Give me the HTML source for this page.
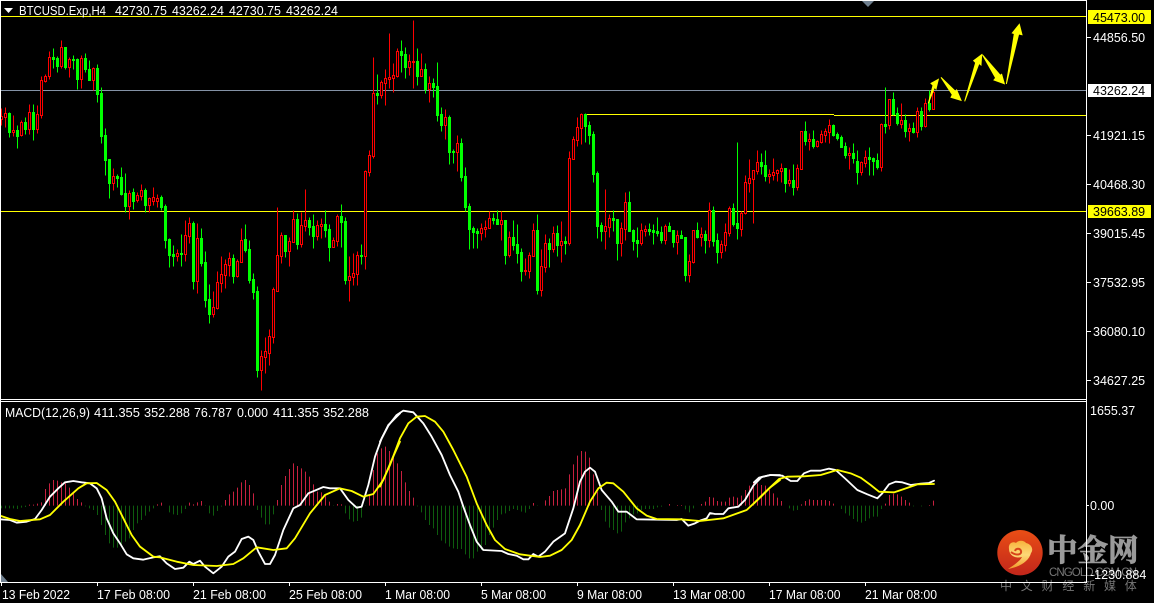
<!DOCTYPE html>
<html><head><meta charset="utf-8"><title>BTCUSD H4</title>
<style>
html,body{margin:0;padding:0;background:#000;width:1154px;height:603px;overflow:hidden}
svg{display:block}
text{font-family:"Liberation Sans",sans-serif;font-size:12.5px;fill:#fff;white-space:pre}
</style></head><body>
<svg width="1154" height="603" viewBox="0 0 1154 603" xmlns="http://www.w3.org/2000/svg">
<rect width="1154" height="603" fill="#000"/>
<!-- level lines -->
<g shape-rendering="crispEdges">
<rect x="1" y="16" width="1085" height="1" fill="#ff0"/>
<rect x="1" y="90" width="1085" height="1" fill="#8492a6"/>
<rect x="1" y="211" width="1085" height="1" fill="#ff0"/>
<rect x="585" y="114" width="249" height="1" fill="#ff0"/>
<rect x="834" y="115" width="252" height="1" fill="#ff0"/>
</g>
<!-- candles -->
<g transform="translate(.5,.5)" shape-rendering="crispEdges" stroke-width="1">
<path stroke="#0f0" fill="#0f0" d="M9 112V137M8 113h2V132h-2zM17 125V148M16 130h2V136h-2zM25 117V134M24 122h2V129h-2zM33 104V140M32 112h2V129h-2zM53 48V68M52 57h2V59h-2zM57 56V72M56 58h2V66h-2zM65 47V69M64 47h2V67h-2zM73 55V69M72 59h2V60h-2zM77 58V89M76 59h2V79h-2zM85 53V72M84 58h2V69h-2zM89 60V80M88 69h2V80h-2zM97 64V102M96 68h2V94h-2zM101 87V143M100 93h2V136h-2zM105 128V175M104 135h2V160h-2zM109 159V198M108 159h2V183h-2zM117 174V187M116 176h2V178h-2zM121 167V195M120 177h2V194h-2zM125 173V212M124 193h2V206h-2zM133 188V209M132 192h2V201h-2zM145 188V212M144 190h2V205h-2zM161 195V210M160 197h2V207h-2zM165 204V248M164 206h2V240h-2zM169 238V267M168 239h2V255h-2zM173 245V266M172 254h2V256h-2zM181 234V266M180 253h2V254h-2zM193 221V289M192 223h2V281h-2zM201 228V266M200 238h2V263h-2zM205 251V307M204 262h2V300h-2zM209 284V323M208 299h2V314h-2zM233 254V283M232 258h2V276h-2zM245 224V252M244 239h2V250h-2zM249 240V283M248 249h2V280h-2zM253 273V299M252 279h2V292h-2zM257 286V377M256 291h2V370h-2zM285 235V257M284 235h2V251h-2zM297 213V249M296 219h2V244h-2zM309 217V235M308 220h2V227h-2zM313 214V248M312 226h2V236h-2zM325 210V237M324 224h2V230h-2zM329 224V261M328 229h2V247h-2zM341 204V247M340 216h2V222h-2zM345 217V284M344 221h2V280h-2zM361 244V264M360 255h2V256h-2zM377 74V104M376 93h2V95h-2zM401 40V72M400 51h2V55h-2zM405 47V78M404 54h2V67h-2zM417 48V85M416 61h2V76h-2zM425 63V93M424 69h2V89h-2zM433 78V97M432 83h2V87h-2zM437 62V121M436 86h2V115h-2zM441 107V131M440 114h2V125h-2zM449 115V164M448 117h2V152h-2zM453 149V163M452 151h2V152h-2zM461 138V181M460 143h2V177h-2zM465 167V211M464 176h2V207h-2zM469 203V249M468 206h2V229h-2zM473 226V248M472 228h2V232h-2zM477 228V248M476 231h2V233h-2zM493 213V224M492 218h2V220h-2zM497 210V224M496 219h2V224h-2zM505 220V264M504 220h2V255h-2zM513 220V250M512 237h2V245h-2zM517 224V263M516 244h2V253h-2zM521 248V281M520 252h2V271h-2zM537 214V294M536 230h2V290h-2zM549 238V267M548 243h2V249h-2zM557 225V256M556 233h2V245h-2zM565 236V254M564 241h2V243h-2zM585 113V142M584 114h2V126h-2zM589 121V144M588 125h2V135h-2zM593 131V182M592 134h2V174h-2zM597 171V238M596 173h2V226h-2zM601 222V241M600 225h2V231h-2zM613 210V231M612 218h2V220h-2zM617 219V260M616 219h2V243h-2zM629 191V231M628 202h2V231h-2zM633 229V250M632 230h2V241h-2zM637 227V257M636 240h2V243h-2zM649 223V235M648 229h2V231h-2zM653 224V244M652 230h2V232h-2zM657 217V236M656 231h2V233h-2zM661 226V243M660 232h2V240h-2zM669 222V231M668 226h2V231h-2zM673 230V247M672 230h2V242h-2zM681 230V238M680 235h2V238h-2zM685 237V281M684 237h2V275h-2zM697 222V238M696 230h2V237h-2zM705 230V253M704 234h2V240h-2zM713 206V246M712 210h2V241h-2zM717 233V263M716 240h2V252h-2zM733 203V226M732 208h2V224h-2zM737 142V239M736 223h2V228h-2zM761 153V174M760 162h2V166h-2zM765 150V181M764 165h2V176h-2zM785 168V192M784 168h2V183h-2zM793 164V195M792 180h2V187h-2zM805 121V145M804 131h2V141h-2zM813 130V148M812 139h2V146h-2zM833 124V136M832 125h2V135h-2zM837 132V140M836 134h2V138h-2zM841 135V147M840 137h2V147h-2zM845 142V158M844 146h2V155h-2zM853 143V163M852 153h2V158h-2zM857 150V184M856 161h2V172h-2zM869 147V175M868 157h2V159h-2zM873 157V175M872 158h2V161h-2zM877 153V169M876 160h2V167h-2zM885 87V133M884 124h2V126h-2zM893 92V115M892 99h2V114h-2zM897 107V125M896 113h2V123h-2zM905 114V137M904 120h2V131h-2zM913 122V133M912 128h2V132h-2zM921 107V130M920 111h2V126h-2zM929 90V111M928 103h2V109h-2z"/>
<path stroke="#f00" fill="#000" d="M1 108V116M1 119V125M0 116h2V119h-2zM5 107V113M5 117V127M4 113h2V117h-2zM13 115V130M13 132V136M12 130h2V132h-2zM21 120V122M21 135V136M20 122h2V135h-2zM29 104V112M29 129V134M28 112h2V129h-2zM37 105V114M37 129V133M36 114h2V129h-2zM41 76V80M41 115V118M40 80h2V115h-2zM45 74V76M45 81V82M44 76h2V81h-2zM49 51V57M49 76V79M48 57h2V76h-2zM61 40V47M61 66V68M60 47h2V66h-2zM69 57V59M69 67V77M68 59h2V67h-2zM81 55V58M81 79V88M80 58h2V79h-2zM93 67V68M93 80V90M92 68h2V80h-2zM113 168V176M113 183V190M112 176h2V183h-2zM129 190V193M129 206V219M128 193h2V206h-2zM137 192V195M137 200V202M136 195h2V200h-2zM141 184V190M141 196V200M140 190h2V196h-2zM149 197V198M149 205V212M148 198h2V205h-2zM153 187V197M153 201V205M152 197h2V201h-2zM157 194V198M157 201V207M156 198h2V201h-2zM177 249V253M177 256V261M176 253h2V256h-2zM185 220V235M185 254V261M184 235h2V254h-2zM189 217V223M189 236V243M188 223h2V236h-2zM197 223V238M197 281V293M196 238h2V281h-2zM213 291V307M213 314V317M212 307h2V314h-2zM217 271V282M217 308V309M216 282h2V308h-2zM221 256V274M221 283V292M220 274h2V283h-2zM225 259V264M225 275V288M224 264h2V275h-2zM229 252V258M229 265V276M228 258h2V265h-2zM237 259V261M237 276V277M236 261h2V276h-2zM241 228V240M240 240h2V262h-2zM261 350V356M261 370V390M260 356h2V370h-2zM265 337V351M265 357V373M264 351h2V357h-2zM269 329V336M269 353V365M268 336h2V353h-2zM273 287V289M273 337V343M272 289h2V337h-2zM277 207V255M276 255h2V291h-2zM281 232V235M281 256V263M280 235h2V256h-2zM289 237V241M289 251V266M288 241h2V251h-2zM293 210V219M292 219h2V242h-2zM301 212V225M301 244V247M300 225h2V244h-2zM305 189V220M305 226V231M304 220h2V226h-2zM317 220V225M317 236V240M316 225h2V236h-2zM321 218V224M321 226V238M320 224h2V226h-2zM333 237V240M332 240h2V247h-2zM337 214V216M337 241V246M336 216h2V241h-2zM349 256V276M349 280V301M348 276h2V280h-2zM353 253V273M353 277V285M352 273h2V277h-2zM357 251V255M357 274V285M356 255h2V274h-2zM365 170V171M365 256V269M364 171h2V256h-2zM369 150V155M369 172V176M368 155h2V172h-2zM373 57V93M373 156V158M372 93h2V156h-2zM381 80V82M381 95V98M380 82h2V95h-2zM385 69V78M385 83V105M384 78h2V83h-2zM389 33V77M389 79V88M388 77h2V79h-2zM393 63V75M393 78V92M392 75h2V78h-2zM397 48V51M397 76V77M396 51h2V76h-2zM409 54V61M409 67V75M408 61h2V67h-2zM413 20V61M413 62V88M412 61h2V62h-2zM421 53V69M421 76V76M420 69h2V76h-2zM429 76V83M429 89V102M428 83h2V89h-2zM445 109V117M445 125V139M444 117h2V125h-2zM457 135V143M457 152V171M456 143h2V152h-2zM481 223V228M481 233V240M480 228h2V233h-2zM485 220V227M485 229V237M484 227h2V229h-2zM489 211V218M488 218h2V228h-2zM501 211V220M501 224V240M500 220h2V224h-2zM509 231V237M509 255V257M508 237h2V255h-2zM525 258V270M525 271V275M524 270h2V271h-2zM529 252V255M529 271V278M528 255h2V271h-2zM533 223V230M532 230h2V256h-2zM541 249V266M541 290V296M540 266h2V290h-2zM545 234V243M545 267V272M544 243h2V267h-2zM553 226V233M553 249V252M552 233h2V249h-2zM561 221V241M561 245V262M560 241h2V245h-2zM569 151V158M569 243V245M568 158h2V243h-2zM573 136V139M572 139h2V159h-2zM577 117V127M577 140V146M576 127h2V140h-2zM581 113V114M581 128V144M580 114h2V128h-2zM605 189V226M605 231V249M604 226h2V231h-2zM609 214V218M609 227V237M608 218h2V227h-2zM621 222V228M621 243V256M620 228h2V243h-2zM625 192V202M625 229V240M624 202h2V229h-2zM641 223V230M641 243V245M640 230h2V243h-2zM645 225V229M645 231V236M644 229h2V231h-2zM665 224V226M665 240V244M664 226h2V240h-2zM677 230V235M677 242V254M676 235h2V242h-2zM689 254V261M689 275V282M688 261h2V275h-2zM693 230V230M693 262V263M692 230h2V262h-2zM701 227V234M701 237V246M700 234h2V237h-2zM709 202V210M709 240V247M708 210h2V240h-2zM721 240V244M721 252V258M720 244h2V252h-2zM725 223V232M725 245V251M724 232h2V245h-2zM729 206V208M729 233V236M728 208h2V233h-2zM741 211V213M741 229V236M740 213h2V229h-2zM745 175V182M745 213V214M744 182h2V213h-2zM749 159V178M749 183V192M748 178h2V183h-2zM753 170V170M753 179V223M752 170h2V179h-2zM757 150V162M757 171V174M756 162h2V171h-2zM769 169V174M769 176V183M768 174h2V176h-2zM773 158V172M773 175V180M772 172h2V175h-2zM777 169V170M777 173V181M776 170h2V173h-2zM781 163V168M781 171V182M780 168h2V171h-2zM789 169V180M789 183V186M788 180h2V183h-2zM797 164V168M797 187V190M796 168h2V187h-2zM801 131V131M801 169V169M800 131h2V169h-2zM809 133V139M809 141V150M808 139h2V141h-2zM817 140V141M817 146V147M816 141h2V146h-2zM821 130V134M821 142V143M820 134h2V142h-2zM825 128V131M825 135V142M824 131h2V135h-2zM829 119V125M829 132V143M828 125h2V132h-2zM849 147V153M849 155V169M848 153h2V155h-2zM861 161V162M861 172V175M860 162h2V172h-2zM865 150V157M865 163V167M864 157h2V163h-2zM881 123V124M881 167V171M880 124h2V167h-2zM889 99V99M889 125V129M888 99h2V125h-2zM901 103V120M901 124V128M900 120h2V124h-2zM909 123V128M909 131V141M908 128h2V131h-2zM917 107V111M917 132V137M916 111h2V132h-2zM925 98V103M925 126V127M924 103h2V126h-2zM933 90V92M932 92h2V109h-2z"/>
</g>
<!-- drawn arrows -->
<g fill="#ff0" stroke="#ff0" stroke-width="3" stroke-linejoin="miter" transform="translate(925,20) scale(.33333)">
<polygon points="10,250 24,196 18,190 40,178 33,207 29,201"/>
<polygon points="48,172 92,215 95,210 108,241 78,232 82,224"/>
<polygon points="119,244 152,128 146,122 170,104 168,135 162,130"/>
<polygon points="172,104 226,166 230,163 238,191 207,180 212,174"/>
<polygon points="244,192 268,41 262,39 283,13 291,44 281,42"/>
</g>
<!-- MACD histogram (y in 3x units) -->
<g transform="translate(.5,395) scale(1,.33333)" shape-rendering="crispEdges" stroke-width="1" fill="none">
<path stroke="#c8203f" d="M29 332V329M33 332V329M37 332V326M41 332V322M45 332V282M49 332V265M53 332V255M57 332V257M61 332V262M65 332V265M69 332V278M73 332V295M77 332V312M81 332V322M157 332V328M161 332V323M189 332V323M193 332V328M197 332V322M201 332V318M225 332V315M229 332V298M233 332V290M237 332V278M241 332V262M245 332V255M249 332V270M253 332V295M277 332V315M281 332V270M285 332V243M289 332V222M293 332V205M297 332V213M301 332V220M305 332V230M309 332V245M313 332V268M317 332V290M321 332V292M325 332V302M329 332V320M337 332V327M341 332V328M369 332V300M373 332V225M377 332V175M381 332V160M385 332V155M389 332V168M393 332V188M397 332V205M401 332V228M405 332V262M409 332V288M413 332V308M533 332V324M545 332V316M549 332V303M553 332V288M557 332V285M561 332V283M565 332V280M569 332V238M573 332V208M577 332V182M581 332V168M585 332V170M589 332V188M593 332V238M597 332V290M669 332V327M677 332V330M681 332V330M701 332V327M705 332V320M709 332V306M713 332V308M717 332V318M721 332V320M725 332V320M729 332V308M733 332V305M737 332V308M741 332V302M745 332V285M749 332V272M753 332V262M757 332V265M761 332V270M765 332V272M769 332V285M773 332V295M777 332V308M781 332V318M801 332V328M805 332V318M809 332V313M813 332V315M817 332V315M821 332V315M825 332V315M829 332V318M833 332V326M885 332V326M889 332V300M893 332V296M897 332V298M901 332V305M905 332V315M909 332V323M929 332V330M933 332V317"/>
<path stroke="#0e5c0e" d="M1 332V340M5 332V340M9 332V340M13 332V340M17 332V342M21 332V338M25 332V336M85 332V334M89 332V340M93 332V345M97 332V360M101 332V390M105 332V420M109 332V445M113 332V458M117 332V458M121 332V455M125 332V440M129 332V430M133 332V405M137 332V385M141 332V375M145 332V362M149 332V350M153 332V340M169 332V352M173 332V358M177 332V360M181 332V355M185 332V342M205 332V333M209 332V355M213 332V362M217 332V348M221 332V335M257 332V345M261 332V368M265 332V388M269 332V388M273 332V358M333 332V333M345 332V355M349 332V373M353 332V380M357 332V378M361 332V368M365 332V333M417 332V334M421 332V352M425 332V375M429 332V390M433 332V400M437 332V420M441 332V437M445 332V445M449 332V455M453 332V460M457 332V462M461 332V462M465 332V478M469 332V490M473 332V490M477 332V470M481 332V465M485 332V450M489 332V420M493 332V398M497 332V375M501 332V358M505 332V355M509 332V348M513 332V342M517 332V345M521 332V350M525 332V353M529 332V342M537 332V333M601 332V345M605 332V380M609 332V398M613 332V405M617 332V415M621 332V410M625 332V382M629 332V370M633 332V358M637 332V355M641 332V345M645 332V342M649 332V342M653 332V342M657 332V337M661 332V335M685 332V343M689 332V352M693 332V340M789 332V340M793 332V347M797 332V345M841 332V342M845 332V355M849 332V362M853 332V372M857 332V380M861 332V383M865 332V378M869 332V370M873 332V365M877 332V365M881 332V342M913 332V334M921 332V334"/>
</g>
<!-- MACD lines -->
<g fill="none" stroke-linejoin="round" stroke-linecap="round" stroke-width="5.5">
<g transform="translate(0,395) scale(.33333)">
<polyline stroke="#fff" points="0,373 30,375 50,383 80,380 105,372 125,345 150,305 175,280 195,262 220,258 245,262 270,265 290,280 305,310 320,370 340,415 360,445 380,478 400,490 430,494 460,487 480,484 500,505 525,522 550,518 568,500 580,507 600,497 615,515 640,535 665,515 685,485 705,470 725,432 745,425 760,435 775,470 795,507 810,507 825,480 850,405 880,340 900,330 925,295 970,276 990,280 1020,280 1045,315 1070,338 1085,335 1105,270 1125,185 1145,130 1165,90 1200,55"/>
<polyline stroke="#ff0" points="0,362 30,372 60,378 120,373 150,360 190,320 235,280 260,265 290,264 320,285 345,320 370,370 395,420 420,455 460,485 480,487 530,500 580,510 650,513 700,507 730,490 770,457 820,465 860,460 885,430 930,355 975,300 1020,280 1055,288 1090,305 1120,297 1150,255 1175,195 1200,140"/>
</g>
<g transform="translate(380,395) scale(.33333)">
<polyline stroke="#fff" points="0,140 25,92 50,60 70,47 100,52 130,85 155,125 185,180 210,240 235,290 250,335 270,390 290,440 310,465 365,468 385,477 410,482 430,493 445,493 460,477 475,485 495,470 520,440 555,415 580,340 600,260 615,230 630,218 645,230 665,285 695,320 715,350 740,350 770,373 890,375 905,372 925,392 945,385 960,377 980,370 990,354 1005,357 1030,357 1045,340 1075,335 1095,315 1120,272 1145,246 1170,240 1200,240"/>
<polyline stroke="#ff0" points="0,275 30,210 60,130 85,85 110,65 135,63 165,80 190,110 220,165 260,245 290,325 320,390 345,435 375,462 420,478 480,486 510,482 545,465 575,435 600,390 630,320 655,280 680,263 700,265 730,290 770,340 800,362 830,372 900,373 960,378 1030,370 1100,345 1140,308 1170,278 1200,255"/>
</g>
<g transform="translate(754,395) scale(.33333)">
<polyline stroke="#fff" points="0,262 15,248 50,240 85,242 110,258 130,258 150,235 170,227 200,227 225,221 245,225 275,252 310,285 340,298 370,310 385,295 405,268 425,260 445,262 470,270 500,266 525,264 540,257"/>
<polyline stroke="#ff0" points="0,325 40,285 75,252 100,245 150,244 200,240 250,225 290,235 320,248 350,270 375,290 420,292 450,282 490,268 540,267"/>
</g>
</g>
<!-- watermark logo -->
<defs>
<linearGradient id="lg" x1="0" y1="0" x2="0" y2="1"><stop offset="0" stop-color="#e94e15"/><stop offset="1" stop-color="#c2261b"/></linearGradient>
<linearGradient id="lc" x1="0" y1="0" x2="0" y2="1"><stop offset="0" stop-color="#f7b23c"/><stop offset=".5" stop-color="#fdd877"/><stop offset="1" stop-color="#f19a2a"/></linearGradient>
</defs>
<circle cx="1020" cy="552.7" r="22.7" fill="url(#lg)"/>
<path fill="url(#lc)" d="M1009 549C1008 543 1013 541 1016 543C1018 540 1024 540 1026 543C1031 544 1034 549 1031 553C1029 561 1020 567 1008 569C1014 565 1020 561 1022 557C1015 559 1009 555 1009 549Z"/>
<path fill="none" stroke="#d8431a" stroke-width="2" d="M1011 552C1016 556 1022 555 1021 551C1020 548 1016 548 1015 551"/>
<text x="1047" y="561" style="font-family:'Liberation Sans','Noto Serif CJK SC',serif;font-size:30.5px;font-weight:700;fill:#9a9a9a;stroke:#9a9a9a;stroke-width:.8px">中金网</text>
<text x="1049" y="576" textLength="88" style="font-size:11.5px;fill:#777">CNGOLD.COM.CN</text>
<text x="1000" y="590" style="font-family:'Liberation Sans','Noto Sans CJK SC',sans-serif;font-size:12px;fill:#777;letter-spacing:8.8px">中文财经新媒体</text>
<!-- frame -->
<g fill="#fff" shape-rendering="crispEdges">
<rect x="0" y="0" width="1087" height="1"/>
<rect x="0" y="0" width="1" height="582"/>
<rect x="1086" y="0" width="1" height="583"/>
<rect x="0" y="399" width="1086" height="1"/>
<rect x="0" y="401" width="1087" height="1"/>
<rect x="0" y="582" width="1087" height="1"/>
<!-- axis ticks -->
<rect x="1087" y="37" width="4" height="1"/><rect x="1087" y="135" width="4" height="1"/><rect x="1087" y="184" width="4" height="1"/><rect x="1087" y="233" width="4" height="1"/><rect x="1087" y="282" width="4" height="1"/><rect x="1087" y="331" width="4" height="1"/><rect x="1087" y="380" width="4" height="1"/><rect x="1087" y="505" width="2" height="1"/>
<rect x="1" y="583" width="1" height="3"/><rect x="97" y="583" width="1" height="3"/><rect x="193" y="583" width="1" height="3"/><rect x="289" y="583" width="1" height="3"/><rect x="385" y="583" width="1" height="3"/><rect x="481" y="583" width="1" height="3"/><rect x="577" y="583" width="1" height="3"/><rect x="673" y="583" width="1" height="3"/><rect x="769" y="583" width="1" height="3"/><rect x="865" y="583" width="1" height="3"/>
</g>
<polygon points="4,8 13,8 8.5,13" fill="#fff"/>
<polygon points="862,1 874,1 868,7" fill="#708090"/>
<polygon points="1,574 8,582 1,582" fill="#708090"/>
<!-- labels -->
<text x="19" y="15" textLength="87" lengthAdjust="spacingAndGlyphs">BTCUSD.Exp,H4</text>
<text x="115" y="15" textLength="52" lengthAdjust="spacingAndGlyphs">42730.75</text>
<text x="172" y="15" textLength="52" lengthAdjust="spacingAndGlyphs">43262.24</text>
<text x="229" y="15" textLength="52" lengthAdjust="spacingAndGlyphs">42730.75</text>
<text x="286" y="15" textLength="52" lengthAdjust="spacingAndGlyphs">43262.24</text>
<text x="5" y="417" textLength="85" lengthAdjust="spacingAndGlyphs">MACD(12,26,9)</text>
<text x="94" y="417" textLength="46" lengthAdjust="spacingAndGlyphs">411.355</text>
<text x="144" y="417" textLength="46" lengthAdjust="spacingAndGlyphs">352.288</text>
<text x="194" y="417" textLength="38" lengthAdjust="spacingAndGlyphs">76.787</text>
<text x="237" y="417" textLength="31" lengthAdjust="spacingAndGlyphs">0.000</text>
<text x="273" y="417" textLength="46" lengthAdjust="spacingAndGlyphs">411.355</text>
<text x="323" y="417" textLength="46" lengthAdjust="spacingAndGlyphs">352.288</text>
<rect x="1088" y="10" width="63" height="14" fill="#ff0"/>
<text x="1093" y="22" style="fill:#000">45473.00</text>
<text x="1093" y="42">44856.50</text>
<rect x="1088" y="84" width="63" height="13" fill="#fff"/>
<text x="1093" y="95" style="fill:#000">43262.24</text>
<text x="1093" y="140">41921.15</text>
<text x="1093" y="189">40468.30</text>
<rect x="1088" y="205" width="63" height="13" fill="#ff0"/>
<text x="1093" y="216" style="fill:#000">39663.89</text>
<text x="1093" y="238">39015.45</text>
<text x="1093" y="287">37532.95</text>
<text x="1093" y="336">36080.10</text>
<text x="1093" y="385">34627.25</text>
<text x="1090" y="415">1655.37</text>
<text x="1090" y="510">0.00</text>
<text x="1090" y="579">-1230.884</text>
<text x="2" y="599" textLength="68" lengthAdjust="spacingAndGlyphs">13 Feb 2022</text>
<text x="97" y="599" textLength="73" lengthAdjust="spacingAndGlyphs">17 Feb 08:00</text>
<text x="193" y="599" textLength="73" lengthAdjust="spacingAndGlyphs">21 Feb 08:00</text>
<text x="289" y="599" textLength="73" lengthAdjust="spacingAndGlyphs">25 Feb 08:00</text>
<text x="385" y="599" textLength="65" lengthAdjust="spacingAndGlyphs">1 Mar 08:00</text>
<text x="481" y="599" textLength="65" lengthAdjust="spacingAndGlyphs">5 Mar 08:00</text>
<text x="577" y="599" textLength="65" lengthAdjust="spacingAndGlyphs">9 Mar 08:00</text>
<text x="673" y="599" textLength="72" lengthAdjust="spacingAndGlyphs">13 Mar 08:00</text>
<text x="769" y="599" textLength="71.5" lengthAdjust="spacingAndGlyphs">17 Mar 08:00</text>
<text x="865" y="599" textLength="72" lengthAdjust="spacingAndGlyphs">21 Mar 08:00</text>
</svg>
</body></html>
